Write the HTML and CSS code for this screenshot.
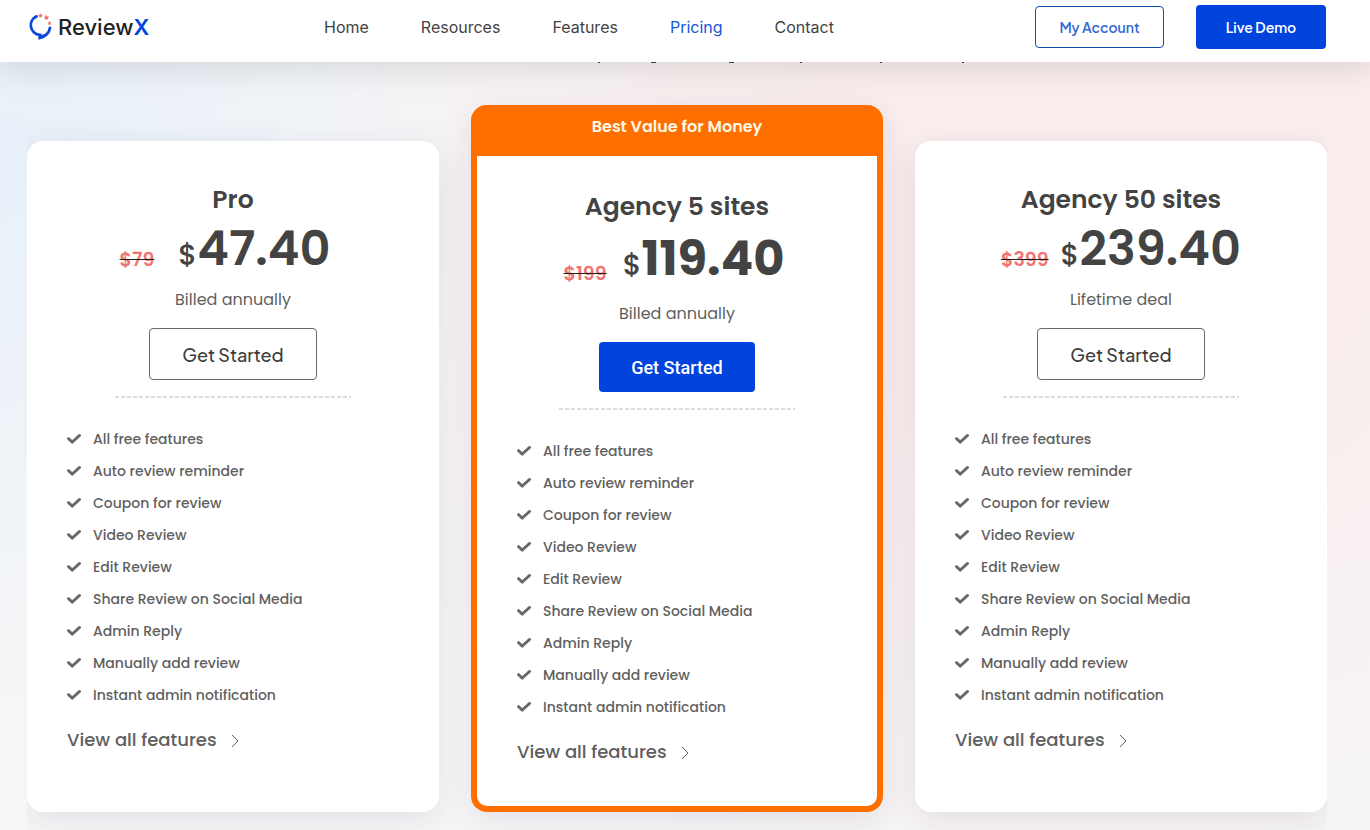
FILE: index.html
```html
<!DOCTYPE html>
<html lang="en">
<head>
  <meta charset="UTF-8" />
  <meta name="viewport" content="width=device-width, initial-scale=1" />
  <title>ReviewX Pricing</title>
  <link rel="stylesheet" href="styles.css">
</head>
<body>
  <!-- shared icons -->
  <svg class="sprite" aria-hidden="true">
    <symbol id="check" viewBox="0 0 14 12">
      <path d="M1.5 5.6 5.2 9 12.6 2.4" fill="none" stroke="currentColor" stroke-width="2.8" stroke-linecap="round" stroke-linejoin="miter" />
    </symbol>
    <symbol id="chevron" viewBox="0 0 8 14">
      <path d="M1 2 7 8 1 14" fill="none" stroke="currentColor" stroke-width="1" />
    </symbol>
  </svg>

  <header class="site-header">
    <a class="logo" href="#">
      <svg class="logo-mark" viewBox="0 0 24 28" aria-hidden="true">
        <path d="M8.6 3.4A9.6 9.6 0 0 0 11.8 21.8V25Q20.8 22.5 22 14.8" fill="none" stroke="#0c47d8" stroke-width="2.8" stroke-linecap="round" />
        <path d="M10.8 21.5V26Q15.5 25 18 21.5z" fill="#0c47d8" />
        <g fill="#f0766e">
          <path d="M12.5.2 13.3 1.6 14.9 1.9 13.8 3 14 4.5 12.5 3.9 11 4.5 11.2 3 10.1 1.9 11.7 1.6z" />
          <path d="M18.4 1.6 19.3 3.4 21.3 3.7 19.9 5.1 20.2 7 18.4 6.1 16.6 7 16.9 5.1 15.5 3.7 17.5 3.4z" />
          <path d="M21.6 8 22.3 9.3 23.8 9.6 22.7 10.6 22.9 12 21.6 11.4 20.3 12 20.5 10.6 19.4 9.6 20.9 9.3z" />
        </g>
      </svg>
      <span>Review<b>X</b></span>
    </a>
    <nav class="nav">
      <a href="#">Home</a>
      <a href="#">Resources</a>
      <a href="#">Features</a>
      <a class="active" href="#">Pricing</a>
      <a href="#">Contact</a>
    </nav>
    <div class="header-actions">
      <a class="btn-account" href="#">My Account</a>
      <a class="btn-demo" href="#">Live Demo</a>
    </div>
  </header>

  <!-- tips of the line scrolled under the header -->
  <div class="under-header">
    <svg viewBox="0 0 576 1" aria-hidden="true">
      <path d="M209 .5h2M262 .5h5M340 .5h5M411 .5h2M491 .5h2M573 .5h2" stroke="#444" stroke-width="1" />
    </svg>
  </div>

  <main class="pricing">
    <section class="card pro">
      <h2>Pro</h2>
      <p class="price">
        <del>$79</del>
        <span class="amount"><span class="currency">$</span>47.40</span>
      </p>
      <p class="billing">Billed annually</p>
      <button class="btn-start" type="button">Get Started</button>
      <hr>
      <ul class="features">
        <li><svg><use href="#check" /></svg>All free features</li>
        <li><svg><use href="#check" /></svg>Auto review reminder</li>
        <li><svg><use href="#check" /></svg>Coupon for review</li>
        <li><svg><use href="#check" /></svg>Video Review</li>
        <li><svg><use href="#check" /></svg>Edit Review</li>
        <li><svg><use href="#check" /></svg>Share Review on Social Media</li>
        <li><svg><use href="#check" /></svg>Admin Reply</li>
        <li><svg><use href="#check" /></svg>Manually add review</li>
        <li><svg><use href="#check" /></svg>Instant admin notification</li>
      </ul>
      <a class="view-all" href="#">View all features <svg><use href="#chevron" /></svg></a>
    </section>

    <section class="card best">
      <p class="ribbon">Best Value for Money</p>
      <h2>Agency 5 sites</h2>
      <p class="price">
        <del>$199</del>
        <span class="amount"><span class="currency">$</span>119.40</span>
      </p>
      <p class="billing">Billed annually</p>
      <button class="btn-start" type="button">Get Started</button>
      <hr>
      <ul class="features">
        <li><svg><use href="#check" /></svg>All free features</li>
        <li><svg><use href="#check" /></svg>Auto review reminder</li>
        <li><svg><use href="#check" /></svg>Coupon for review</li>
        <li><svg><use href="#check" /></svg>Video Review</li>
        <li><svg><use href="#check" /></svg>Edit Review</li>
        <li><svg><use href="#check" /></svg>Share Review on Social Media</li>
        <li><svg><use href="#check" /></svg>Admin Reply</li>
        <li><svg><use href="#check" /></svg>Manually add review</li>
        <li><svg><use href="#check" /></svg>Instant admin notification</li>
      </ul>
      <a class="view-all" href="#">View all features <svg><use href="#chevron" /></svg></a>
    </section>

    <section class="card">
      <h2>Agency 50 sites</h2>
      <p class="price">
        <del>$399</del>
        <span class="amount"><span class="currency">$</span>239.40</span>
      </p>
      <p class="billing">Lifetime deal</p>
      <button class="btn-start" type="button">Get Started</button>
      <hr>
      <ul class="features">
        <li><svg><use href="#check" /></svg>All free features</li>
        <li><svg><use href="#check" /></svg>Auto review reminder</li>
        <li><svg><use href="#check" /></svg>Coupon for review</li>
        <li><svg><use href="#check" /></svg>Video Review</li>
        <li><svg><use href="#check" /></svg>Edit Review</li>
        <li><svg><use href="#check" /></svg>Share Review on Social Media</li>
        <li><svg><use href="#check" /></svg>Admin Reply</li>
        <li><svg><use href="#check" /></svg>Manually add review</li>
        <li><svg><use href="#check" /></svg>Instant admin notification</li>
      </ul>
      <a class="view-all" href="#">View all features <svg><use href="#chevron" /></svg></a>
    </section>
  </main>
</body>
</html>
```
FILE: styles.css
```css
:root {
  --blue: #0043dd;
  --orange: #ff6f00;
  --heading: #434343;
  --text: #5f5f5f;
  --font: Poppins, Inter, sans-serif;
  --font-btn: "Plus Jakarta Sans", Inter, sans-serif;
}

*, *::before, *::after {
  box-sizing: border-box;
}

body {
  margin: 0;
  min-height: 100vh;
  font-family: var(--font);
  color: var(--text);
  background:
    radial-gradient(ellipse 36% 65% at 0 20%, #e7f0f9, transparent),
    radial-gradient(ellipse 60% 90% at 80% 22%, #f9eded 35%, transparent),
    #f6f6f7;
}

h2, p, ul {
  margin: 0;
  padding: 0;
}

a {
  color: inherit;
  text-decoration: none;
}

.sprite {
  display: none;
}

/* header */
.site-header {
  position: sticky;
  top: 0;
  z-index: 1;
  display: grid;
  grid-template-columns: 296px 1fr auto;
  align-items: center;
  height: 62px;
  padding: 0 44px 8px 28px;
  background: #fff;
  box-shadow: 0 0 36px 4px rgba(0, 0, 0, 0.13);
}

.logo {
  display: flex;
  align-items: center;
  gap: 6px;
  font-family: Inter, sans-serif;
  font-size: 22px;
  font-weight: 500;
  color: #222;
}

.logo b {
  font-weight: 600;
  color: var(--blue);
}

.logo-mark {
  width: 24px;
  height: 28px;
}

.nav {
  display: flex;
  gap: 52px;
  font-family: Inter, sans-serif;
  font-size: 16px;
  color: #434343;
}

.nav .active {
  color: #1458d6;
}

.header-actions {
  display: flex;
  align-items: center;
  gap: 32px;
  font-family: var(--font-btn);
  font-size: 14px;
  font-weight: 600;
}

.btn-account,
.btn-demo {
  display: flex;
  align-items: center;
  justify-content: center;
  border-radius: 4px;
}

.btn-account {
  width: 129px;
  height: 42px;
  border: 1px solid #0e4fa8;
  color: #3568d4;
}

.btn-demo {
  width: 130px;
  height: 44px;
  background: var(--blue);
  color: #fff;
}

.under-header {
  display: flex;
  justify-content: center;
  padding-right: 16px;
}

.under-header svg {
  width: 576px;
  height: 1px;
}

/* plans */
.pricing {
  display: grid;
  grid-template-columns: repeat(3, 1fr);
  align-items: end;
  gap: 32px;
  padding: 42px 0 18px;
  margin: 0 43px 0 27px;
  overflow-x: clip;
}

.card {
  display: flex;
  flex-direction: column;
  align-items: center;
  padding: 40px 40px 58px;
  border-radius: 16px;
  background: #fff;
  box-shadow: 0 8px 32px rgba(60, 30, 80, 0.1);
}

.card h2 {
  font-size: 25px;
  line-height: 38px;
  font-weight: 600;
  color: var(--heading);
}

.price {
  display: flex;
  align-items: flex-start;
  gap: 12px;
  height: 69px;
  color: var(--heading);
}

.price del {
  align-self: flex-end;
  margin-bottom: 16px;
  font-size: 19px;
  line-height: 24px;
  font-weight: 600;
  color: #f07474;
  text-decoration: line-through 1px #222;
}

.amount {
  font-size: 48px;
  line-height: 60px;
  font-weight: 600;
}

.currency {
  font-size: 29px;
  font-weight: 500;
}

.billing {
  font-size: 16px;
  line-height: 24px;
}

.btn-start {
  height: 52px;
  margin-top: 16px;
  padding: 0 32px;
  border: 1px solid #6b6b6b;
  border-radius: 4px;
  background: #fff;
  color: #3c3c3c;
  font-family: var(--font-btn);
  font-size: 18px;
  font-weight: 500;
  cursor: pointer;
}

.card hr {
  width: 236px;
  height: 2px;
  margin: 16px 0 25px;
  border: 0;
  background: repeating-linear-gradient(to right, #dcdcdc 0 4px, transparent 4px 6px);
}

.features {
  align-self: stretch;
  list-style: none;
  font-size: 14px;
  line-height: 32px;
  font-weight: 500;
}

.features li {
  display: flex;
  align-items: center;
  gap: 12px;
}

.features svg {
  width: 14px;
  height: 12px;
  color: #686868;
}

.view-all {
  display: flex;
  align-items: center;
  gap: 14px;
  align-self: flex-start;
  margin-top: 15px;
  font-size: 18px;
  line-height: 28px;
  font-weight: 500;
}

.view-all svg {
  width: 8px;
  height: 16px;
}

.pro .price {
  gap: 24px;
  padding-right: 16px;
}

/* highlighted plan */
.best {
  padding: 0 34px 40px;
  border: 6px solid var(--orange);
  border-top: 0;
}

.best .ribbon {
  align-self: stretch;
  margin: 0 -40px 32px;
  padding: 8px 0 16px;
  border-radius: 16px 16px 0 0;
  background: var(--orange);
  color: #fff8e6;
  font-size: 16px;
  line-height: 27px;
  font-weight: 600;
  text-align: center;
}

.best .price {
  gap: 16px;
  height: 76px;
  padding-right: 6px;
}

.best .amount {
  line-height: 66px;
  font-weight: 700;
}

.best .features,
.best .view-all {
  margin-left: 6px;
}

.best .btn-start {
  height: 50px;
  border: 0;
  background: var(--blue);
  color: #fff;
  font-family: Roboto, sans-serif;
  font-weight: 500;
}
```
